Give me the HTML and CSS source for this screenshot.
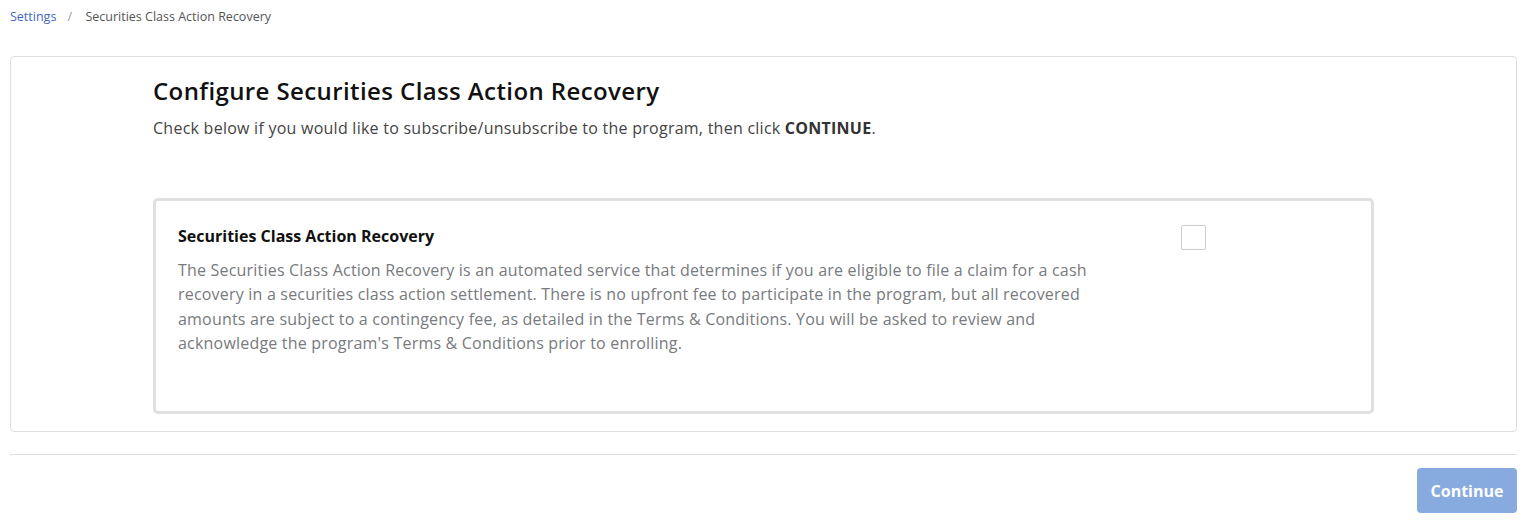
FILE: index.html
```html
<!DOCTYPE html>
<html lang="en">
<head>
    <meta charset="UTF-8">
    <meta name="viewport" content="width=device-width, initial-scale=1.0">
    <title>Securities Class Action Recovery</title>
    <link rel="stylesheet" href="styles.css">
</head>
<body>
    <nav class="breadcrumb">
        <a href="#" class="crumb-link">Settings</a>
        <span class="crumb-sep">/</span>
        <span class="crumb-current">Securities Class Action Recovery</span>
    </nav>

    <div class="panel">
        <div class="panel-body">
            <h1>Configure Securities Class Action Recovery</h1>
            <p class="intro">Check below if you would like to subscribe/unsubscribe to the program, then click <strong>CONTINUE</strong>.</p>

            <div class="option-card">
                <div class="option-text">
                    <h2>Securities Class Action Recovery</h2>
                    <p>The Securities Class Action Recovery is an automated service that determines if you are eligible to file a claim for a cash recovery in a securities class action settlement. There is no upfront fee to participate in the program, but all recovered amounts are subject to a contingency fee, as detailed in the Terms &amp; Conditions. You will be asked to review and acknowledge the program's Terms &amp; Conditions prior to enrolling.</p>
                </div>
                <label class="option-check">
                    <input type="checkbox">
                    <span class="box"></span>
                </label>
            </div>
        </div>
    </div>

    <div class="footer">
        <button class="btn-continue" disabled>Continue</button>
    </div>
</body>
</html>
```

FILE: styles.css
```css
/* page styles */
body, h1, h2, p, button {
    margin: 0;
    padding: 0;
    box-sizing: border-box;
}

body {
    font-family: 'Open Sans', 'Liberation Sans', sans-serif;
    color: #333;
    background: #fff;
    padding: 0 22px 0 10px;
}

.breadcrumb {
    font-size: 12.5px;
    height: 56px;
    padding-top: 8px;
    box-sizing: border-box;
}

.crumb-link {
    color: #3f67c2;
    text-decoration: none;
}

.crumb-sep {
    color: #999;
    margin: 0 10px 0 8px;
}

.crumb-current {
    color: #555;
}

.panel {
    border: 1px solid #dedede;
    border-radius: 4px;
    padding: 18px 142px 17px;
}

h1 {
    font-size: 24px;
    font-weight: 600;
    letter-spacing: 0.4px;
    color: #111;
    line-height: 32px;
}

.intro {
    font-size: 16px;
    letter-spacing: 0.25px;
    color: #444;
    margin-top: 10px;
    margin-bottom: 59px;
    line-height: 22px;
}

.intro strong {
    font-weight: 700;
    color: #333;
}

.option-card {
    display: flex;
    border: 3px solid #e0e0e0;
    border-radius: 5px;
    padding: 24px 22px 56px;
}

.option-text {
    width: 940px;
}

h2 {
    font-size: 16px;
    font-weight: 700;
    color: #111;
    line-height: 22px;
}

.option-text p {
    font-size: 16px;
    letter-spacing: 0.2px;
    line-height: 24.3px;
    color: #777a7e;
    margin-top: 11px;
}

.option-check {
    margin-left: 63px;
    position: relative;
}

.option-check input {
    position: absolute;
    opacity: 0;
}

.option-check .box {
    display: block;
    width: 25px;
    height: 25px;
    box-sizing: border-box;
    border: 1px solid #d0ccc8;
    border-radius: 2px;
}

.footer {
    border-top: 1px solid #dedede;
    margin-top: 22px;
    padding-top: 13px;
    display: flex;
    justify-content: flex-end;
}

.btn-continue {
    background: #88abdf;
    color: #fff;
    border: none;
    border-radius: 4px;
    font-family: inherit;
    font-size: 16px;
    font-weight: 700;
    width: 100px;
    height: 45px;
}
```
